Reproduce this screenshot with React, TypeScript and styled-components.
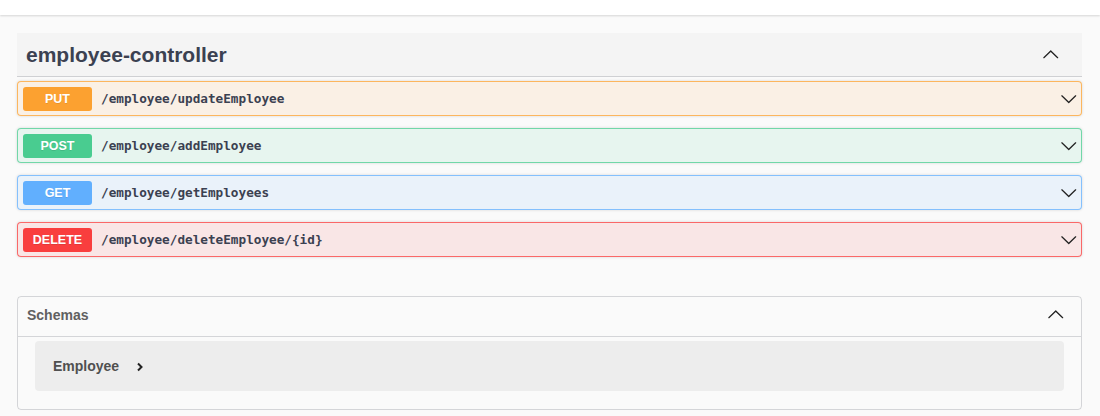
import React from "react";
import styled, { createGlobalStyle } from "styled-components";

const GlobalStyle = createGlobalStyle`
  html, body { margin: 0; padding: 0; background: #fafafa; }
  body { font-family: "Liberation Sans", Arial, sans-serif; color: #3b4151; }
`;

const TopBar = styled.div`
  height: 15px;
  background: #fff;
  box-shadow: 0 1px 2px 0 rgba(0, 0, 0, 0.15);
`;

const Wrapper = styled.div`
  padding: 18px 18px 0 17px;
`;

const TagHeader = styled.div`
  display: flex;
  align-items: center;
  justify-content: space-between;
  height: 43px;
  padding: 0 23px 0 9px;
  background: #f4f4f4;
  border-bottom: 1px solid rgba(59, 65, 81, 0.2);
`;

const TagTitle = styled.h3`
  margin: 0;
  font-size: 21px;
  font-weight: 700;
  color: #3b4151;
`;

const OpList = styled.div`
  display: flex;
  flex-direction: column;
  gap: 12px;
  margin-top: 4px;
`;

const methodColors: Record<string, string> = {
  PUT: "252, 161, 48",
  POST: "73, 204, 144",
  GET: "97, 175, 254",
  DELETE: "249, 62, 62",
};

const Opblock = styled.div<{ $rgb: string }>`
  display: flex;
  align-items: center;
  height: 35px;
  box-sizing: border-box;
  padding: 0 4px 0 5px;
  border: 1px solid rgba(${(p) => p.$rgb}, 0.75);
  background: rgba(${(p) => p.$rgb}, 0.1);
  border-radius: 4px;
  box-shadow: 0 0 3px rgba(0, 0, 0, 0.15);
`;

const Badge = styled.span<{ $rgb: string }>`
  display: flex;
  align-items: center;
  justify-content: center;
  width: 69px;
  height: 24px;
  border-radius: 3px;
  background: rgb(${(p) => p.$rgb});
  color: #fff;
  font-size: 12.5px;
  font-weight: 700;
  text-shadow: 0 1px 0 rgba(0, 0, 0, 0.1);
`;

const Path = styled.span`
  flex: 1;
  margin-left: 9px;
  font-family: "DejaVu Sans Mono", "Liberation Mono", monospace;
  font-size: 12.7px;
  font-weight: 700;
  color: #3b4151;
`;

const Arrow = styled.svg<{ $up?: boolean }>`
  width: 17.5px;
  height: 17.5px;
  fill: #222;
  transform: ${(p) => (p.$up ? "rotate(180deg)" : "none")};
  flex-shrink: 0;
`;

const ArrowIcon = ({ up }: { up?: boolean }) => (
  <Arrow viewBox="0 0 20 20" $up={up}>
    <path d="M17.418 6.109c.272-.268.709-.268.979 0s.271.701 0 .969l-7.908 7.83c-.27.268-.707.268-.979 0l-7.908-7.83c-.27-.268-.27-.701 0-.969.271-.268.709-.268.979 0L10 13.25l7.418-7.141z" />
  </Arrow>
);

const Models = styled.section`
  margin-top: 39px;
  border: 1px solid rgba(59, 65, 81, 0.2);
  border-radius: 4px;
`;

const ModelsHeader = styled.div`
  display: flex;
  align-items: center;
  justify-content: space-between;
  height: 39px;
  padding: 0 17px 3px 9px;
  box-sizing: border-box;
  border-bottom: 1px solid rgba(59, 65, 81, 0.2);
  height: 40px;
`;

const ModelsTitle = styled.h4`
  margin: 0;
  font-size: 14px;
  font-weight: 700;
  color: #606060;
`;

const ModelBox = styled.div`
  display: flex;
  align-items: center;
  height: 50px;
  margin: 4px 17px 18px 17px;
  padding-left: 18px;
  border-radius: 4px;
  background: rgba(0, 0, 0, 0.05);
`;

const ModelTitle = styled.span`
  font-size: 14px;
  font-weight: 700;
  color: #505050;
`;

const ModelToggle = styled.svg`
  width: 8px;
  height: 10px;
  margin-left: 17px;
  margin-top: 2px;
  fill: none;
  stroke: #222;
  stroke-width: 2;
`;

const ops = [
  { method: "PUT", path: "/employee/updateEmployee" },
  { method: "POST", path: "/employee/addEmployee" },
  { method: "GET", path: "/employee/getEmployees" },
  { method: "DELETE", path: "/employee/deleteEmployee/{id}" },
];

export default function App() {
  return (
    <>
      <GlobalStyle />
      <TopBar />
      <Wrapper>
        <TagHeader>
          <TagTitle>employee-controller</TagTitle>
          <ArrowIcon up />
        </TagHeader>
        <OpList>
          {ops.map((op) => (
            <Opblock key={op.path} $rgb={methodColors[op.method]}>
              <Badge $rgb={methodColors[op.method]}>{op.method}</Badge>
              <Path>{op.path}</Path>
              <ArrowIcon />
            </Opblock>
          ))}
        </OpList>
        <Models>
          <ModelsHeader>
            <ModelsTitle>Schemas</ModelsTitle>
            <ArrowIcon up />
          </ModelsHeader>
          <ModelBox>
            <ModelTitle>Employee</ModelTitle>
            <ModelToggle viewBox="0 0 8 10">
              <path d="M2 1.5 L5.5 5 L2 8.5" />
            </ModelToggle>
          </ModelBox>
        </Models>
      </Wrapper>
    </>
  );
}
